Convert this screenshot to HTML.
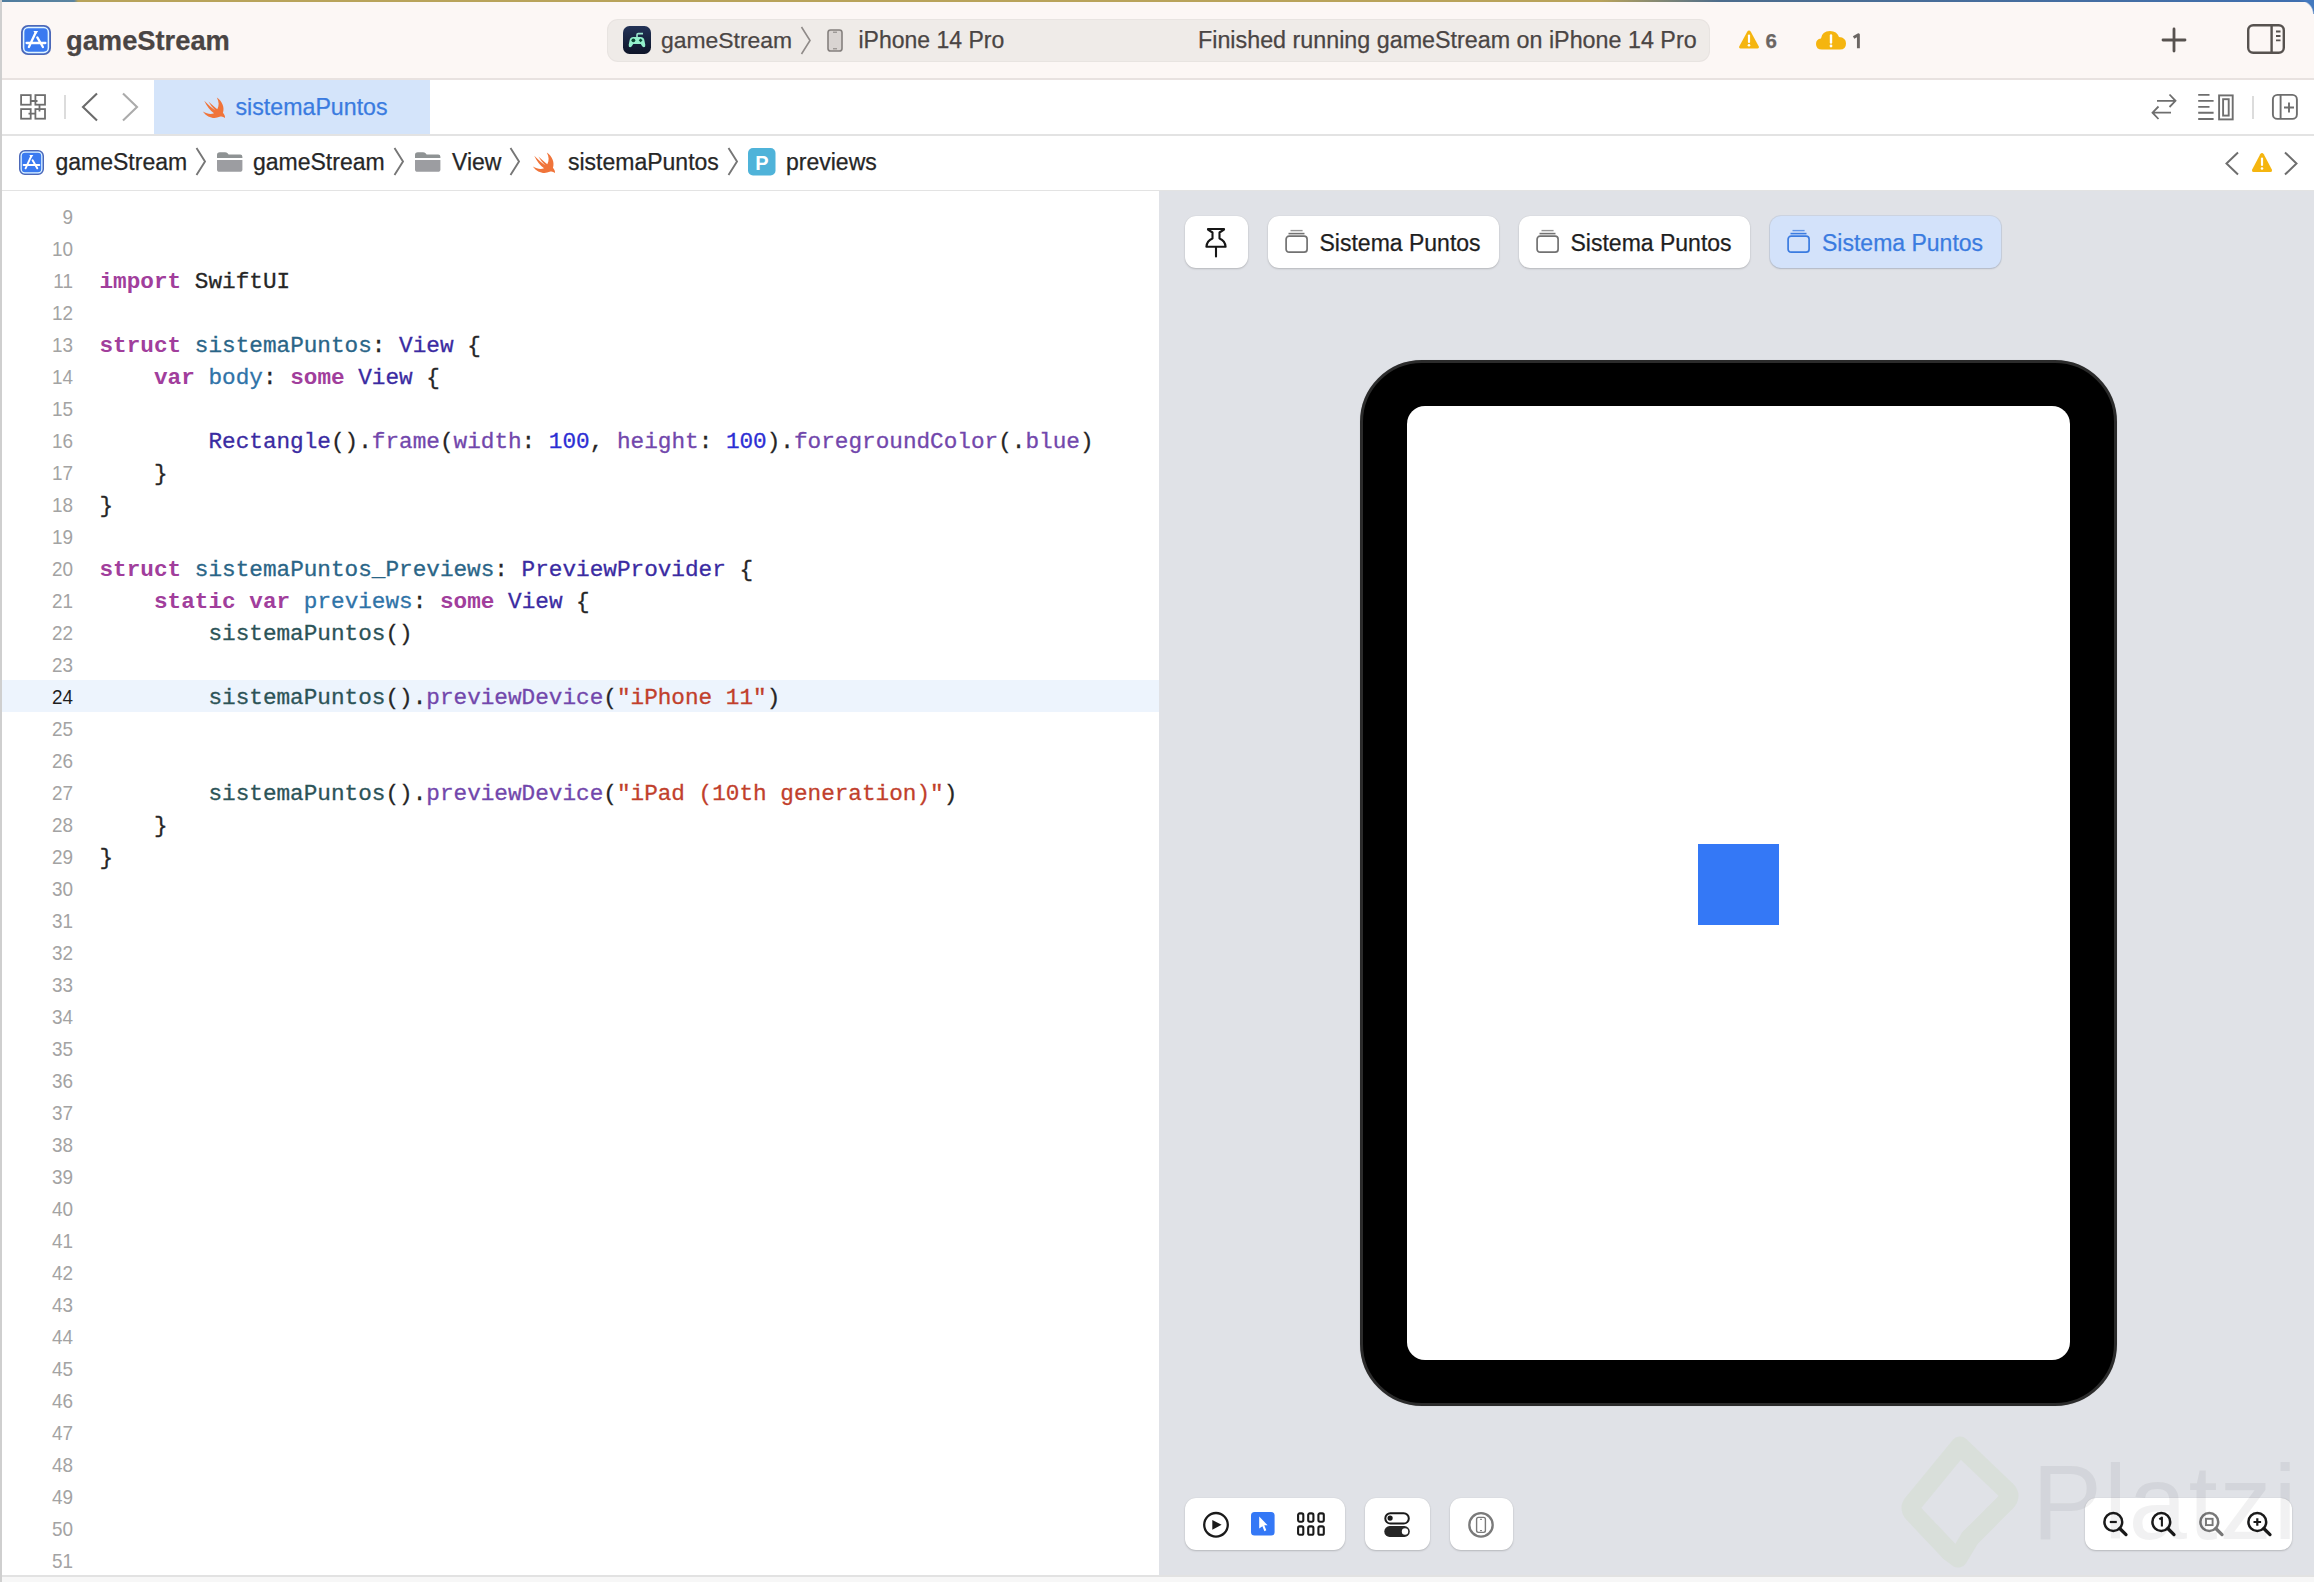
<!DOCTYPE html>
<html><head><meta charset="utf-8">
<style>
*{box-sizing:border-box;margin:0;padding:0}
html,body{width:2314px;height:1582px;overflow:hidden;background:#fff;font-family:"Liberation Sans",sans-serif;position:relative}
.a{position:absolute}
.t{position:absolute;white-space:pre;line-height:1;-webkit-text-stroke:0.25px currentColor}
svg{position:absolute;overflow:visible}
#top{left:0;top:0;width:2314px;height:79px;background:#FCF7F5}
#stripe{left:0;top:0;width:2314px;height:2px;background:linear-gradient(90deg,#4F7C9E 0,#5B84A0 74px,#B8A35A 78px,#B9A35A 1600px,#4C6C8C 1720px,#3F6FB0 2314px)}
#tabbar{left:0;top:80px;width:2314px;height:54px;background:#fff}
#crumb{left:0;top:136px;width:2314px;height:54px;background:#fff}
.hl{background:#E0DCDA}
#editor{left:0;top:191px;width:1159px;height:1384px;background:#fff;overflow:hidden}
#canvas{left:1159px;top:191px;width:1155px;height:1384px;background:#E0E2E7;overflow:hidden}
#status{left:0;top:1575px;width:2314px;height:7px;background:#F7F7F7;border-top:2px solid #E2E2E2}
.code{-webkit-text-stroke:0.3px currentColor;font-family:"Liberation Mono",monospace;font-size:22.7px;line-height:32px;white-space:pre;color:#262626}
.ln{transform:scaleX(0.9);transform-origin:100% 0;font-family:"Liberation Sans",sans-serif;font-size:21px;line-height:32px;white-space:pre;color:#A3A3A3;text-align:right;width:73px;left:0}
.kw{color:#A13E9C;font-weight:bold;-webkit-text-stroke:0}
.ty{color:#2A6587}
.dc{color:#2F73A8}
.st{color:#3A2BA2}
.pr{color:#7247AC}
.nu{color:#2C2ED4}
.sr{color:#C13F2C}
.pc{color:#2C5357}
.cur{color:#1E1E1E}
.btn{position:absolute;background:#fff;border-radius:11px;box-shadow:0 1px 2px rgba(0,0,0,.18),0 0 1px rgba(0,0,0,.12)}
</style></head><body>
<div id="top" class="a"></div>
<div id="stripe" class="a"></div>
<div class="a" style="left:2300px;top:0;width:14px;height:14px;background:radial-gradient(circle at 0 100%, rgba(68,121,190,0) 12.5px, #4479BE 14px)"></div>

<div class="a hl" style="left:0;top:78px;width:2314px;height:2px;background:#E8E2E0"></div>

<!-- TOP BAR -->
<svg style="left:21px;top:25px" width="30" height="30" viewBox="0 0 30 30">
 <rect x="0.9" y="0.9" width="28.2" height="28.2" rx="6.2" fill="#3A7AF0" stroke="#4C68B8" stroke-width="1.8"/>
 <rect x="2.6" y="2.6" width="24.8" height="24.8" rx="4.6" fill="none" stroke="#E2F6FF" stroke-width="1.5"/>
 <path d="M14.7 7.4 L7.9 22 M16.3 12.4 L21.9 22 M5.6 18 H24.4" stroke="#fff" stroke-width="2.3" fill="none" stroke-linecap="round"/>
 <path d="M12.3 6 H17.2 L14.9 9.2Z" fill="#fff"/>
</svg>
<div class="t" style="left:66px;top:26.6px;font-size:27.3px;font-weight:bold;color:#4A4544">gameStream</div>
<div class="a" style="left:607px;top:18.5px;width:1103px;height:43px;border-radius:11px;background:#EFEBE8;box-shadow:inset 0 0 0 1px rgba(120,100,90,0.05)"></div>
<svg style="left:623px;top:26px" width="28" height="28" viewBox="0 0 28 28">
 <defs><linearGradient id="gg" x1="0" y1="0" x2="0" y2="1"><stop offset="0" stop-color="#233357"/><stop offset="1" stop-color="#0D1428"/></linearGradient></defs>
 <rect width="28" height="28" rx="6.5" fill="url(#gg)"/>
 <path d="M14 11.5 V8.8 Q14 7.6 15.2 7.6 H20" fill="none" stroke="#9DE8D0" stroke-width="1.6"/>
 <path d="M7.2 21.3 Q5.4 21.3 5.7 18.8 L6.8 13.6 Q7.5 10.9 10.3 10.9 H17.7 Q20.5 10.9 21.2 13.6 L22.3 18.8 Q22.6 21.3 20.8 21.3 Q19.6 21.3 18.7 19.6 L17.8 18 H10.2 L9.3 19.6 Q8.4 21.3 7.2 21.3Z" fill="#93F0CC"/>
 <circle cx="10.4" cy="14.3" r="1.9" fill="#0B4A34"/><path d="M17.6 12.4 L19.5 14.3 L17.6 16.2 L15.7 14.3Z" fill="#0B4A34"/>
</svg>
<div class="t" style="left:661px;top:28.5px;font-size:22.9px;color:#4A4544">gameStream</div>
<svg style="left:800px;top:26px" width="12" height="29" viewBox="0 0 12 29"><path d="M1.5 1 L10 14.5 L1.5 28" stroke="#8F8A88" stroke-width="1.6" fill="none"/></svg>
<svg style="left:827px;top:29px" width="16" height="23" viewBox="0 0 16 23">
 <rect x="1" y="1" width="14" height="21" rx="2.6" fill="#D9D4D2" stroke="#85807E" stroke-width="1.6"/>
 <path d="M6 3.2 H10" stroke="#85807E" stroke-width="1"/><path d="M6 19.8 H10" stroke="#85807E" stroke-width="1"/>
</svg>
<div class="t" style="left:858.5px;top:28.5px;font-size:23px;color:#4A4544">iPhone 14 Pro</div>
<div class="t" style="left:1198px;top:28.5px;font-size:23.3px;color:#4A4544">Finished running gameStream on iPhone 14 Pro</div>
<svg style="left:1738px;top:29px" width="22" height="21" viewBox="0 0 22 21">
 <path d="M11 1.5 Q12 1.5 12.8 2.8 L20.8 17.5 Q21.5 19.5 19.5 19.5 H2.5 Q0.5 19.5 1.2 17.5 L9.2 2.8 Q10 1.5 11 1.5Z" fill="#F5B50F"/>
 <path d="M11 6.5 V13" stroke="#fff" stroke-width="2.2" stroke-linecap="round"/><circle cx="11" cy="16.2" r="1.3" fill="#fff"/>
</svg>
<div class="t" style="left:1765.5px;top:31px;font-size:20.5px;font-weight:bold;color:#6B6663">6</div>
<svg style="left:1815px;top:29px" width="32" height="22" viewBox="0 0 32 22">
 <path d="M7 20.5 Q1 20.5 1 15 Q1 10 6 9.5 Q7 2 15 2 Q22 2 24 8 Q31 8.5 31 14.5 Q31 20.5 25 20.5 Z" fill="#F5B50F"/>
 <path d="M16 6.5 V13.5" stroke="#fff" stroke-width="2.4" stroke-linecap="round"/><circle cx="16" cy="17" r="1.4" fill="#fff"/>
</svg>
<svg style="left:1850px;top:33px" width="14" height="18" viewBox="0 0 14 18"><path d="M3.6 4.6 L8.4 1.8 V15.2" fill="none" stroke="#6B6663" stroke-width="2.9" stroke-linejoin="round"/></svg>
<svg style="left:2162px;top:28px" width="24" height="24" viewBox="0 0 24 24"><path d="M12 1 V23 M1 12 H23" stroke="#57524F" stroke-width="2.8" stroke-linecap="round"/></svg>
<svg style="left:2246px;top:23px" width="40" height="32" viewBox="0 0 40 32">
 <rect x="2.2" y="2.2" width="35.6" height="27.6" rx="5" fill="none" stroke="#57524F" stroke-width="2.4"/>
 <path d="M25.6 2 V30" stroke="#57524F" stroke-width="2.4"/>
 <path d="M30 8.5 H34.5 M30 13 H34.5 M30 17.3 H34.5" stroke="#57524F" stroke-width="1.8"/>
</svg>

<div id="tabbar" class="a"></div>
<div class="a" style="left:0;top:134px;width:2314px;height:2px;background:#E3E3E3"></div>
<div id="crumb" class="a"></div>
<div class="a" style="left:0;top:190px;width:2314px;height:1px;background:#E3E3E3"></div>

<!-- TAB BAR -->
<svg style="left:19px;top:93px" width="28" height="28" viewBox="0 0 28 28" fill="none" stroke="#6E6E6E" stroke-width="1.8">
 <rect x="2.1" y="2.1" width="9.6" height="9.6"/><rect x="16.4" y="2.1" width="9.6" height="9.6"/>
 <rect x="2.1" y="16.1" width="9.6" height="9.6"/><rect x="16.4" y="16.1" width="9.6" height="9.6"/>
 <path d="M11.7 8 H18.5 M20.5 11.7 V18.5 M16.4 20.6 H9.5"/>
</svg>
<div class="a" style="left:64px;top:95px;width:2px;height:24px;background:#DCDCDC"></div>
<svg style="left:81px;top:92px" width="18" height="30" viewBox="0 0 18 30"><path d="M16 1.5 L2 15 L16 28.5" stroke="#6B6B6B" stroke-width="2.1" fill="none"/></svg>
<svg style="left:121px;top:92px" width="18" height="30" viewBox="0 0 18 30"><path d="M2 1.5 L16 15 L2 28.5" stroke="#ABABAB" stroke-width="2.1" fill="none"/></svg>
<div class="a" style="left:154px;top:80px;width:276px;height:54px;background:#D4E4FA"></div>
<svg style="left:202px;top:97px" width="25" height="21" viewBox="0 0 100 90"><path d="M60 2 C84 18 94 46 86 68 C92 75 96 83 95 90 C88 84 80 82 72 85 C50 95 20 90 0 62 C18 73 34 75 48 70 C32 58 16 38 6 16 C22 32 40 48 54 58 C42 46 30 30 24 19 C36 30 50 44 62 52 C70 38 70 20 60 2Z" fill="#F0743A"/></svg>
<div class="t" style="left:235.5px;top:96.4px;font-size:23.2px;color:#3A7BE0">sistemaPuntos</div>
<svg style="left:2150px;top:92px" width="28" height="30" viewBox="0 0 28 30" fill="none" stroke="#6E6E6E" stroke-width="1.8">
 <path d="M7 8.8 H25 M19.5 2.5 L25.5 8.8 L19.5 15 M21 20.7 H3 M8.5 14.5 L2.5 20.7 L8.5 27"/>
</svg>
<svg style="left:2196px;top:92px" width="40" height="30" viewBox="0 0 40 30" fill="none" stroke="#6E6E6E" stroke-width="1.9">
 <path d="M2.2 2.9 H13.5 M2.2 8.9 H17.6 M2.2 14.9 H13.5 M2.2 20.8 H17.6 M2.2 27 H17.6"/>
 <rect x="23.1" y="3.4" width="13.6" height="24"/><rect x="27.1" y="7.2" width="5.6" height="16.4"/>
</svg>
<div class="a" style="left:2252px;top:96px;width:2px;height:23px;background:#DCDCDC"></div>
<svg style="left:2271px;top:93px" width="28" height="28" viewBox="0 0 28 28" fill="none" stroke="#6E6E6E" stroke-width="1.9">
 <rect x="1.9" y="1.9" width="24" height="24" rx="4.5"/><path d="M9.6 2 V26 M18 9.5 V19.5 M13 14.5 H23"/>
</svg>
<!-- BREADCRUMB -->
<svg style="left:19px;top:150px" width="25" height="25" viewBox="0 0 30 30">
 <rect x="0.9" y="0.9" width="28.2" height="28.2" rx="6.2" fill="#3A7AF0" stroke="#4C68B8" stroke-width="1.8"/>
 <rect x="2.6" y="2.6" width="24.8" height="24.8" rx="4.6" fill="none" stroke="#E2F6FF" stroke-width="1.5"/>
 <path d="M14.7 7.4 L7.9 22 M16.3 12.4 L21.9 22 M5.6 18 H24.4" stroke="#fff" stroke-width="2.3" fill="none" stroke-linecap="round"/>
 <path d="M12.3 6 H17.2 L14.9 9.2Z" fill="#fff"/>
</svg>
<div class="t" style="left:55.5px;top:151px;font-size:23px;color:#262626">gameStream</div>
<svg style="left:195px;top:147px" width="12" height="29" viewBox="0 0 12 29"><path d="M1.5 1 L10 14.5 L1.5 28" stroke="#767676" stroke-width="1.9" fill="none"/></svg>
<svg style="left:217px;top:152px" width="26" height="21" viewBox="0 0 26 21"><path d="M0 6 V3 Q0 0.2 2.8 0.2 H8 Q9.6 0.2 10.6 1.3 L11.6 2.5 H23.2 Q25.4 2.5 25.4 4.7 V6Z" fill="#8F9394"/><path d="M0 8.1 H25.4 V17.2 Q25.4 19.8 22.8 19.8 H2.6 Q0 19.8 0 17.2Z" fill="#9C9DA1"/></svg>
<div class="t" style="left:253px;top:151px;font-size:23px;color:#262626">gameStream</div>
<svg style="left:393px;top:147px" width="12" height="29" viewBox="0 0 12 29"><path d="M1.5 1 L10 14.5 L1.5 28" stroke="#767676" stroke-width="1.9" fill="none"/></svg>
<svg style="left:415px;top:152px" width="26" height="21" viewBox="0 0 26 21"><path d="M0 6 V3 Q0 0.2 2.8 0.2 H8 Q9.6 0.2 10.6 1.3 L11.6 2.5 H23.2 Q25.4 2.5 25.4 4.7 V6Z" fill="#8F9394"/><path d="M0 8.1 H25.4 V17.2 Q25.4 19.8 22.8 19.8 H2.6 Q0 19.8 0 17.2Z" fill="#9C9DA1"/></svg>
<div class="t" style="left:452px;top:151px;font-size:23px;color:#262626">View</div>
<svg style="left:509px;top:147px" width="12" height="29" viewBox="0 0 12 29"><path d="M1.5 1 L10 14.5 L1.5 28" stroke="#767676" stroke-width="1.9" fill="none"/></svg>
<svg style="left:532px;top:152px" width="25" height="21" viewBox="0 0 100 90"><path d="M60 2 C84 18 94 46 86 68 C92 75 96 83 95 90 C88 84 80 82 72 85 C50 95 20 90 0 62 C18 73 34 75 48 70 C32 58 16 38 6 16 C22 32 40 48 54 58 C42 46 30 30 24 19 C36 30 50 44 62 52 C70 38 70 20 60 2Z" fill="#F0743A"/></svg>
<div class="t" style="left:568px;top:151px;font-size:23px;color:#262626">sistemaPuntos</div>
<svg style="left:727px;top:147px" width="12" height="29" viewBox="0 0 12 29"><path d="M1.5 1 L10 14.5 L1.5 28" stroke="#767676" stroke-width="1.9" fill="none"/></svg>
<svg style="left:748px;top:148px" width="28" height="28" viewBox="0 0 28 28"><rect width="27.5" height="27.5" rx="5" fill="#4FB3D9"/><text x="13.8" y="21.5" text-anchor="middle" font-family="Liberation Sans" font-weight="bold" font-size="20" fill="#fff">P</text></svg>
<div class="t" style="left:786px;top:151px;font-size:23px;color:#262626">previews</div>
<svg style="left:2224px;top:151px" width="16" height="25" viewBox="0 0 16 25"><path d="M14 1.5 L2.5 12.5 L14 23.5" stroke="#6E6E6E" stroke-width="2" fill="none"/></svg>
<svg style="left:2251px;top:152px" width="22" height="21" viewBox="0 0 22 21">
 <path d="M11 1 Q12 1 12.8 2.3 L20.8 17.5 Q21.5 20 19.5 20 H2.5 Q0.5 20 1.2 17.5 L9.2 2.3 Q10 1 11 1Z" fill="#F5B50F"/>
 <path d="M11 6.5 V13" stroke="#fff" stroke-width="2.2" stroke-linecap="round"/><circle cx="11" cy="16.5" r="1.3" fill="#fff"/>
</svg>
<svg style="left:2283px;top:151px" width="16" height="25" viewBox="0 0 16 25"><path d="M2 1.5 L13.5 12.5 L2 23.5" stroke="#6E6E6E" stroke-width="2" fill="none"/></svg>

<div id="editor" class="a">
<div class="a" style="left:2px;top:489px;width:1157px;height:32px;background:#EDF4FD"></div>
<div class="a ln" style="top:10px"><span>9</span>
<span>10</span>
<span>11</span>
<span>12</span>
<span>13</span>
<span>14</span>
<span>15</span>
<span>16</span>
<span>17</span>
<span>18</span>
<span>19</span>
<span>20</span>
<span>21</span>
<span>22</span>
<span>23</span>
<span class=cur>24</span>
<span>25</span>
<span>26</span>
<span>27</span>
<span>28</span>
<span>29</span>
<span>30</span>
<span>31</span>
<span>32</span>
<span>33</span>
<span>34</span>
<span>35</span>
<span>36</span>
<span>37</span>
<span>38</span>
<span>39</span>
<span>40</span>
<span>41</span>
<span>42</span>
<span>43</span>
<span>44</span>
<span>45</span>
<span>46</span>
<span>47</span>
<span>48</span>
<span>49</span>
<span>50</span>
<span>51</span></div>
<div class="a code" style="left:99.5px;top:11px">

<span class="kw">import</span> SwiftUI

<span class="kw">struct</span> <span class="ty">sistemaPuntos</span>: <span class="st">View</span> {
    <span class="kw">var</span> <span class="dc">body</span>: <span class="kw">some</span> <span class="st">View</span> {

        <span class="st">Rectangle</span>().<span class="pr">frame</span>(<span class="pr">width</span>: <span class="nu">100</span>, <span class="pr">height</span>: <span class="nu">100</span>).<span class="pr">foregroundColor</span>(.<span class="pr">blue</span>)
    }
}

<span class="kw">struct</span> <span class="ty">sistemaPuntos_Previews</span>: <span class="st">PreviewProvider</span> {
    <span class="kw">static</span> <span class="kw">var</span> <span class="dc">previews</span>: <span class="kw">some</span> <span class="st">View</span> {
        <span class="pc">sistemaPuntos</span>()

        <span class="pc">sistemaPuntos</span>().<span class="pr">previewDevice</span>(<span class="sr">"iPhone 11"</span>)


        <span class="pc">sistemaPuntos</span>().<span class="pr">previewDevice</span>(<span class="sr">"iPad (10th generation)"</span>)
    }
}





















</div>
</div>
<div id="canvas" class="a"></div>

<!-- CANVAS -->
<div class="btn" style="left:1185px;top:215.5px;width:63px;height:52.5px"></div>
<svg style="left:1204px;top:226px" width="24" height="33" viewBox="0 0 24 33" fill="none" stroke="#161616" stroke-width="2.1" stroke-linejoin="round">
 <path d="M4 3 H20 V3.6 L15.5 6.5 V12.5 Q21 14.5 21.6 20.8 H2.4 Q3 14.5 8.5 12.5 V6.5 L4 3.6Z"/><path d="M12 21 V30.5" stroke-linecap="round"/>
</svg>
<div class="btn" style="left:1267.7px;top:215.5px;width:231px;height:52.5px"></div>
<svg style="left:1285.2px;top:228.7px" width="24" height="26" viewBox="0 0 24 26" fill="none" stroke="#727272">
 <rect x="1.1" y="7.2" width="21" height="16" rx="3" stroke-width="1.7"/>
 <path d="M3.5 4.6 H19.5" stroke-width="1.6"/><path d="M5.5 1.6 H17.6" stroke-width="1.4" opacity=".75"/></svg>
<div class="t" style="left:1319.5px;top:231.5px;font-size:23px;color:#1E1E1E">Sistema Puntos</div>
<div class="btn" style="left:1519px;top:215.5px;width:231px;height:52.5px"></div>
<svg style="left:1536.2px;top:228.7px" width="24" height="26" viewBox="0 0 24 26" fill="none" stroke="#727272">
 <rect x="1.1" y="7.2" width="21" height="16" rx="3" stroke-width="1.7"/>
 <path d="M3.5 4.6 H19.5" stroke-width="1.6"/><path d="M5.5 1.6 H17.6" stroke-width="1.4" opacity=".75"/></svg>
<div class="t" style="left:1570.5px;top:231.5px;font-size:23px;color:#1E1E1E">Sistema Puntos</div>
<div class="btn" style="left:1769.7px;top:215.5px;width:231.3px;height:52.5px;background:#D3E2FA;box-shadow:0 1px 2px rgba(0,0,0,.14),0 0 0 1px rgba(120,150,200,.18)"></div>
<svg style="left:1787.2px;top:228.7px" width="24" height="26" viewBox="0 0 24 26" fill="none" stroke="#3A7BE0">
 <rect x="1.1" y="7.2" width="21" height="16" rx="3" stroke-width="1.7"/>
 <path d="M3.5 4.6 H19.5" stroke-width="1.6"/><path d="M5.5 1.6 H17.6" stroke-width="1.4" opacity=".75"/></svg>
<div class="t" style="left:1822px;top:231.5px;font-size:23px;color:#3A7BE0">Sistema Puntos</div>
<!-- iPad -->
<div class="a" style="left:1360px;top:360px;width:756.5px;height:1045.5px;border-radius:62px;background:#000;border:3px solid #2B2B2B;box-shadow:0 0 1px rgba(0,0,0,.2)"></div>
<div class="a" style="left:1407px;top:406px;width:663px;height:954px;border-radius:18px;background:#fff"></div>
<div class="a" style="left:1698px;top:844px;width:81px;height:81px;background:#3478F6"></div>
<!-- bottom toolbar -->
<div class="btn" style="left:1185px;top:1498px;width:159.5px;height:52px"></div>
<svg style="left:1200px;top:1509px" width="32" height="32" viewBox="0 0 32 32">
 <circle cx="16" cy="15.8" r="11.8" fill="none" stroke="#1A1A1A" stroke-width="2.3"/><path d="M12.3 11 L21.6 15.8 L12.3 20.7Z" fill="#1A1A1A"/>
</svg>
<svg style="left:1251px;top:1512px" width="24" height="24" viewBox="0 0 24 24">
 <rect width="23.6" height="23.6" rx="3.5" fill="#3478F6"/>
 <path d="M8.2 4.4 L16.6 13.2 L13.3 13.3 L15.3 18.3 L13.4 19.2 L11.4 14.2 L8.2 16.6Z" fill="#fff"/>
</svg>
<svg style="left:1296px;top:1511px" width="30" height="26" viewBox="0 0 30 26" fill="none" stroke="#1A1A1A" stroke-width="2.1">
 <rect x="2.1" y="2.4" width="5.2" height="8.3" rx="1.6"/><rect x="12.2" y="2.4" width="5.2" height="8.3" rx="1.6"/><rect x="22.4" y="2.4" width="5.4" height="8.3" rx="1.6"/>
 <rect x="2.1" y="15.4" width="5.2" height="8.4" rx="1.6"/><rect x="12.2" y="15.4" width="5.2" height="8.4" rx="1.6"/><rect x="22.4" y="15.4" width="5.4" height="8.4" rx="1.6"/>
</svg>
<div class="btn" style="left:1365px;top:1498px;width:64.7px;height:52px"></div>
<svg style="left:1382px;top:1510px" width="30" height="30" viewBox="0 0 30 30">
 <rect x="3.3" y="3.3" width="23.5" height="10.3" rx="5.15" fill="none" stroke="#1A1A1A" stroke-width="2"/>
 <circle cx="8.1" cy="8.1" r="2.6" fill="#1A1A1A"/>
 <rect x="2.3" y="16.1" width="25.5" height="10.8" rx="5.4" fill="#262626"/>
 <circle cx="23" cy="21.5" r="3.2" fill="#fff"/>
</svg>
<div class="btn" style="left:1450px;top:1498px;width:63px;height:52px"></div>
<svg style="left:1466px;top:1510px" width="30" height="30" viewBox="0 0 30 30" fill="none" stroke="#7A7A7A">
 <circle cx="15" cy="14.9" r="11.7" stroke-width="2.3"/>
 <rect x="10.6" y="7.4" width="8.8" height="15" rx="1.8" stroke-width="1.4"/><path d="M14 9.3 H16 M14 20.6 H16" stroke-width="1"/>
</svg>
<div class="btn" style="left:2084.5px;top:1498px;width:207.5px;height:52px"></div>
<svg style="left:2101px;top:1509px" width="30" height="30" viewBox="0 0 30 30" fill="none" stroke="#1A1A1A">
 <circle cx="12.3" cy="13" r="8.9" stroke-width="2.5"/><path d="M18.8 19.5 L25 25.6" stroke-width="3.3" stroke-linecap="round"/><path d="M8.8 13 H15.8" stroke-width="2.2"/></svg><svg style="left:2149.3px;top:1509px" width="30" height="30" viewBox="0 0 30 30" fill="none" stroke="#1A1A1A">
 <circle cx="12.3" cy="13" r="8.9" stroke-width="2.5"/><path d="M18.8 19.5 L25 25.6" stroke-width="3.3" stroke-linecap="round"/><path d="M10.3 10.4 L12.9 8.6 V17.6" stroke-width="2.1" stroke-linejoin="round"/></svg><svg style="left:2197.3px;top:1509px" width="30" height="30" viewBox="0 0 30 30" fill="none" stroke="#787878">
 <circle cx="12.3" cy="13" r="8.9" stroke-width="2.5"/><path d="M18.8 19.5 L25 25.6" stroke-width="3.3" stroke-linecap="round"/><rect x="9" y="9.8" width="6.6" height="6.3" stroke-width="1.9"/></svg><svg style="left:2244.8px;top:1509px" width="30" height="30" viewBox="0 0 30 30" fill="none" stroke="#1A1A1A">
 <circle cx="12.3" cy="13" r="8.9" stroke-width="2.5"/><path d="M18.8 19.5 L25 25.6" stroke-width="3.3" stroke-linecap="round"/><path d="M8.5 13 H16.1 M12.3 9.2 V16.8" stroke-width="2.2"/></svg>

<!-- watermark -->
<svg style="left:1900px;top:1434px" width="120" height="136" viewBox="0 0 120 136" opacity="0.08">
 <path d="M60 12 L106 56 Q112 62 106 68 L70 104 M50 118 L14 80 Q8 74 14 68 L60 12" fill="none" stroke="#8BC34A" stroke-width="19" stroke-linecap="round" stroke-linejoin="round"/>
 <path d="M70 104 L58 124 L50 118" fill="none" stroke="#8BC34A" stroke-width="19" stroke-linecap="round" stroke-linejoin="round"/>
</svg>
<div class="t" style="left:2032px;top:1450px;font-size:105px;letter-spacing:1.6px;-webkit-text-stroke:0;color:rgba(0,0,10,0.055)">Platzi</div>
<div id="status" class="a"></div>
<div class="a" style="left:0;top:0;width:2px;height:1582px;background:#CFCFCF"></div>
</body></html>
